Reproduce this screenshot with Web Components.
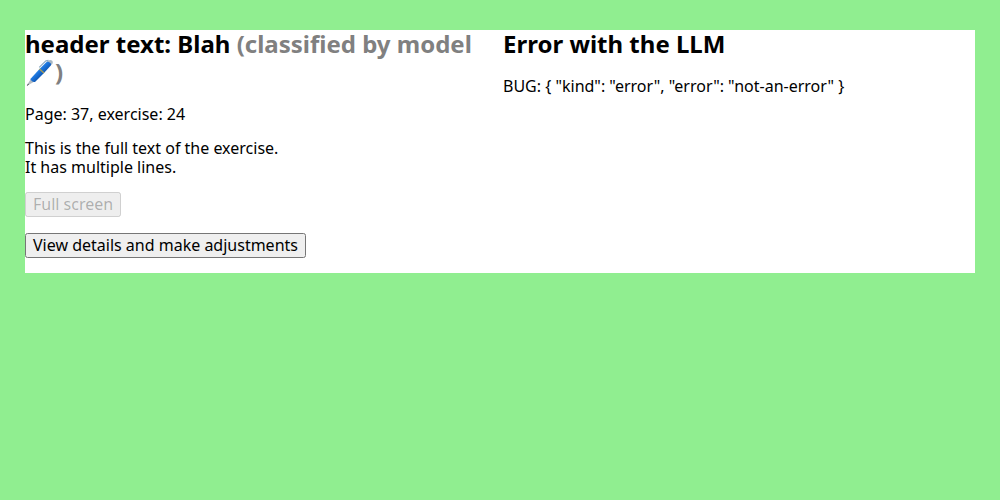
<!DOCTYPE html>
<html lang="en">
<head>
<meta charset="utf-8">
<title>Exercise preview</title>
<style>
body { margin: 0; background: lightgreen; font: 16px/19px "Noto Sans", sans-serif; color: #000; }
</style>
</head>
<body>
<exercise-preview></exercise-preview>
<script>
class PreviewCard extends HTMLElement {
  constructor() {
    super();
    this.attachShadow({ mode: "open" }).innerHTML = `
      <style>
        :host { display: grid; grid-template-columns: 1fr 1fr; gap: 6px; background: #fff; }
      </style>
      <slot></slot>`;
  }
}
class PreviewColumn extends HTMLElement {
  constructor() {
    super();
    this.attachShadow({ mode: "open" }).innerHTML = `
      <style>
        :host { display: block; min-width: 0; padding-bottom: 15px; }
        h2 { margin: 0 0 19px; font-size: 24px; line-height: 28px; font-weight: 700; }
        .body { display: flex; flex-direction: column; align-items: flex-start; gap: 15px; }
        ::slotted(p) { margin: 0; }
      </style>
      <h2><slot name="title"></slot></h2>
      <div class="body"><slot></slot></div>`;
  }
}
class PenIcon extends HTMLElement {
  constructor() {
    super();
    this.attachShadow({ mode: "open" }).innerHTML = `
      <style>
        :host { display: inline-block; width: 30px; height: 28px; vertical-align: top; }
        svg { display: block; overflow: visible; }
      </style>
      <svg width="30" height="28" viewBox="0 0 30 28" aria-hidden="true">
        <defs>
          <linearGradient id="barrel" gradientUnits="userSpaceOnUse" x1="12" y1="10" x2="18" y2="16">
            <stop offset="0" stop-color="#3f95ea"/>
            <stop offset=".5" stop-color="#1b74dc"/>
            <stop offset="1" stop-color="#1159b5"/>
          </linearGradient>
        </defs>
        <path d="M1.6 28 L6 20.4 L9.6 23.6 Z" fill="#b4bcc2"/>
        <path d="M1.6 28 L3 25.6 L4.2 26.6 Z" fill="#5c6469"/>
        <path d="M5.4 21 L14.5 11 L19 15 L10 24 Q6.8 24.4 5.4 21 Z" fill="url(#barrel)"/>
        <path d="M14.5 11 L21 4.5 Q23 2.7 25 3.2 Q27.4 4.6 25.8 7.6 L19 15 Z" fill="url(#barrel)"/>
        <path d="M14 11.5 L15 10.5 L19.5 14.5 L18.5 15.5 Z" fill="#a49b55"/>
        <path d="M22 3.6 Q24.5 1.2 27 2.4 Q28.8 4.4 26.6 7 Q25.8 4.4 22 3.6 Z" fill="#a8b8c4"/>
        <path d="M23.5 2.4 L20.8 2.8 L14.2 9.4" fill="none" stroke="#8eabc5" stroke-width="1.2" stroke-linejoin="round"/>
      </svg>`;
  }
}
class ActionButton extends HTMLElement {
  constructor() {
    super();
    this.attachShadow({ mode: "open" }).innerHTML = `
      <style>
        :host { display: block; }
        button { display: block; font: inherit; }
      </style>
      <button type="button"><slot></slot></button>`;
    this.shadowRoot.querySelector("button").disabled = this.hasAttribute("disabled");
  }
}
class ExercisePreview extends HTMLElement {
  constructor() {
    super();
    this.attachShadow({ mode: "open" }).innerHTML = `
      <style>
        :host { display: block; padding: 30px 25px; }
        .source { color: gray; }
        .actions { display: flex; flex-direction: column; align-items: flex-start; gap: 16px; }
      </style>
      <preview-card>
        <preview-column>
          <span slot="title">header text: Blah <span class="source">(classified by model <pen-icon></pen-icon>)</span></span>
          <p>Page: 37, exercise: 24</p>
          <p>This is the full text of the exercise.<br>It has multiple lines.</p>
          <div class="actions">
            <action-button disabled>Full screen</action-button>
            <action-button>View details and make adjustments</action-button>
          </div>
        </preview-column>
        <preview-column>
          <span slot="title">Error with the LLM</span>
          <p>BUG: { "kind": "error", "error": "not-an-error" }</p>
        </preview-column>
      </preview-card>`;
  }
}
customElements.define("preview-card", PreviewCard);
customElements.define("preview-column", PreviewColumn);
customElements.define("pen-icon", PenIcon);
customElements.define("action-button", ActionButton);
customElements.define("exercise-preview", ExercisePreview);
</script>
</body>
</html>
